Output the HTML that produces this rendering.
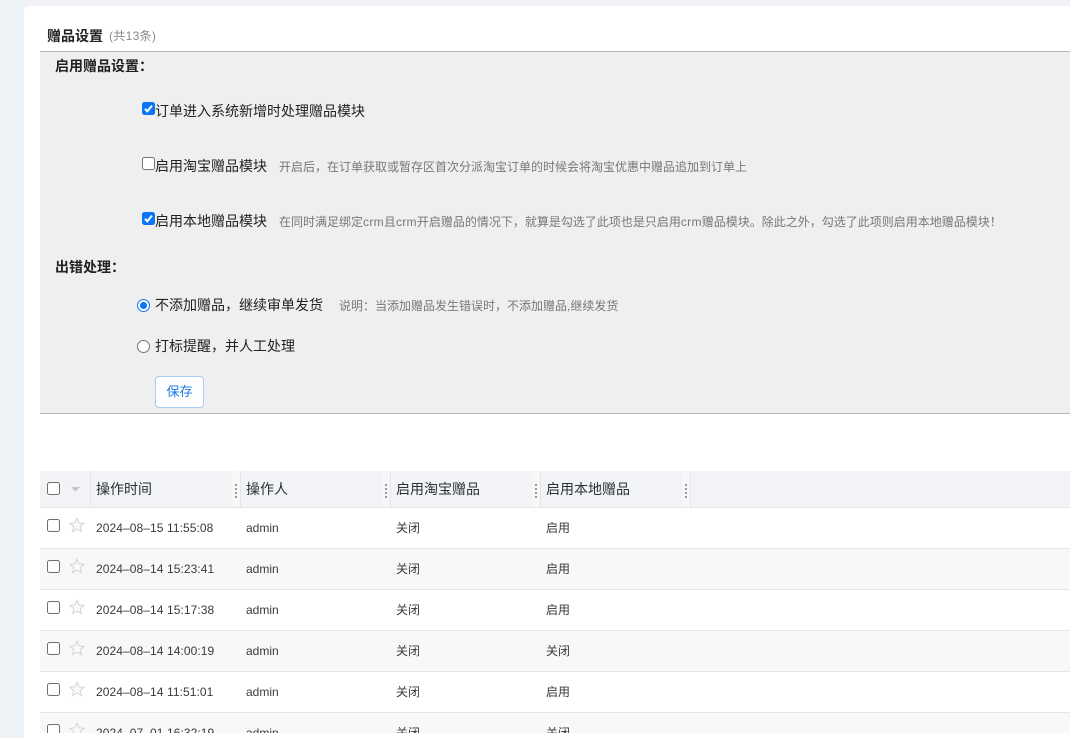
<!DOCTYPE html>
<html lang="zh">
<head>
<meta charset="utf-8">
<style>
html,body{margin:0;padding:0;width:1070px;height:738px;overflow:hidden;background:#f0f2f5;}
body{position:relative;font-family:"Liberation Sans","Noto Sans CJK SC",sans-serif;color:#222;}
.abs,.t,.cb,.rd,.row,.hc,.grip{position:absolute;}
.t{white-space:nowrap;line-height:20px;}
.side{left:0;top:0;width:24px;height:738px;background:linear-gradient(to right,#f0f2f5 0,#f0f2f5 8px,#eaf3f8 24px);}
.card{left:24px;top:6px;width:1046px;height:732px;background:#fff;border-top-left-radius:4px;}
.panel{left:40px;top:51px;width:1030px;height:361px;background:#efefef;border-top:1px solid #b5b5b5;border-bottom:1px solid #b5b5b5;box-sizing:content-box;}
.l{font-size:14px;color:#222;}
.n{font-size:12px;color:#777;}
.b{font-size:14px;font-weight:bold;color:#222;}
.cb{width:13px;height:13px;box-sizing:border-box;border-radius:2.5px;}
.on{background:#0b75f5;}
.off{background:#fff;border:1px solid #767676;}
.cb svg{position:absolute;left:0;top:0;}
.rd{width:13px;height:13px;box-sizing:border-box;border-radius:50%;background:#fff;border:1px solid #767676;}
.rd.sel{border:1.5px solid #0b75f5;}
.rd.sel:after{content:"";position:absolute;left:1.5px;top:1.5px;width:7px;height:7px;border-radius:50%;background:#0b75f5;}
.btn{left:155px;top:376px;width:49px;height:32px;box-sizing:border-box;background:#fff;border:1px solid #a9cdf5;border-radius:4px;color:#1677e6;font-size:13px;line-height:30px;text-align:center;}
.clip{left:40px;top:471px;width:1030px;height:262px;overflow:hidden;}
.head{left:0;top:0;width:1030px;height:36px;background:#f1f3f7;border-bottom:1px solid #e4e6ea;}
.hc{top:0;height:36px;width:1px;background:#e4e6ea;}
.gp{position:absolute;top:0;width:8px;height:36px;background:#f7f7f8;}
.grip{width:2px;height:2px;background:#999;box-shadow:0 4px 0 #999,0 8px 0 #999,0 12px 0 #999;}
.ht{font-size:14px;color:#2b2f36;top:8px;}
.row{left:0;width:1030px;height:40px;background:#fff;border-bottom:1px solid #e4e6ea;}
.row.alt{background:#f8f8f8;}
.row .t{font-size:12px;color:#3a3a3a;top:10px;}
.row .d{letter-spacing:.08px;}
.row .cb{left:7px;top:11px;border-color:#6f6f6f;}
.row svg.star{position:absolute;left:29px;top:9px;}
</style>
</head>
<body>
<div class="abs side"></div>
<div class="abs card"></div>

<div class="t" style="left:47px;top:26px;font-size:14px;font-weight:bold;color:#222;">赠品设置</div>
<div class="t" style="left:109px;top:26px;font-size:12px;color:#888;letter-spacing:.3px;">(共13条)</div>

<div class="abs panel"></div>

<div class="t b" style="left:55px;top:56px;">启用赠品设置：</div>

<div class="cb on" style="left:142px;top:102px;"><svg width="13" height="13" viewBox="0 0 13 13"><path d="M3 6.8L5.3 9.3L10 3.6" fill="none" stroke="#fff" stroke-width="2"/></svg></div>
<div class="t l" style="left:155px;top:101px;">订单进入系统新增时处理赠品模块</div>

<div class="cb off" style="left:142px;top:157px;"></div>
<div class="t l" style="left:155px;top:156px;">启用淘宝赠品模块</div>
<div class="t n" style="left:279px;top:157px;">开启后，在订单获取或暂存区首次分派淘宝订单的时候会将淘宝优惠中赠品追加到订单上</div>

<div class="cb on" style="left:142px;top:212px;"><svg width="13" height="13" viewBox="0 0 13 13"><path d="M3 6.8L5.3 9.3L10 3.6" fill="none" stroke="#fff" stroke-width="2"/></svg></div>
<div class="t l" style="left:155px;top:211px;">启用本地赠品模块</div>
<div class="t n" style="left:279px;top:212px;">在同时满足绑定<span style="letter-spacing:.3px">crm</span>且<span style="letter-spacing:.3px">crm</span>开启赠品的情况下，就算是勾选了此项也是只启用<span style="letter-spacing:.3px">crm</span>赠品模块。除此之外，勾选了此项则启用本地赠品模块！</div>

<div class="t b" style="left:55px;top:257px;">出错处理：</div>

<div class="rd sel" style="left:137px;top:299px;"></div>
<div class="t l" style="left:155px;top:295px;">不添加赠品，继续审单发货</div>
<div class="t n" style="left:339px;top:296px;">说明：当添加赠品发生错误时，不添加赠品,继续发货</div>

<div class="rd" style="left:137px;top:340px;"></div>
<div class="t l" style="left:155px;top:336px;">打标提醒，并人工处理</div>

<div class="abs btn">保存</div>

<div class="abs clip">
  <div class="abs head"></div>
  <div class="cb off" style="left:7px;top:11px;border-color:#6f6f6f;"></div>
  <svg style="position:absolute;left:31px;top:16px;" width="9" height="5" viewBox="0 0 9 5"><path d="M0 0H9L4.5 4.5Z" fill="#c4c4c4"/></svg>
  <div class="hc" style="left:50px;"></div>
  <div class="gp" style="left:192px;"></div><div class="grip" style="left:195px;top:13px;"></div><div class="hc" style="left:200px;"></div>
  <div class="gp" style="left:342px;"></div><div class="grip" style="left:345px;top:13px;"></div><div class="hc" style="left:350px;"></div>
  <div class="gp" style="left:492px;"></div><div class="grip" style="left:495px;top:13px;"></div><div class="hc" style="left:500px;"></div>
  <div class="gp" style="left:642px;"></div><div class="grip" style="left:645px;top:13px;"></div><div class="hc" style="left:650px;"></div>
  <div class="t ht" style="left:56px;">操作时间</div>
  <div class="t ht" style="left:206px;">操作人</div>
  <div class="t ht" style="left:356px;">启用淘宝赠品</div>
  <div class="t ht" style="left:506px;">启用本地赠品</div>

  <div class="row" style="top:37px;">
    <div class="cb off"></div>
    <svg class="star" width="16" height="16" viewBox="0 0 16 16"><path d="M8 1.2L10 5.9L15 6.3L11.2 9.6L12.4 14.6L8 11.9L3.6 14.6L4.8 9.6L1 6.3L6 5.9Z" fill="#fafafa" stroke="#d4d4d4"/></svg>
    <div class="t d" style="left:56px;">2024–08–15 11:55:08</div><div class="t" style="left:206px;">admin</div><div class="t" style="left:356px;">关闭</div><div class="t" style="left:506px;">启用</div>
  </div>
  <div class="row alt" style="top:78px;">
    <div class="cb off"></div>
    <svg class="star" width="16" height="16" viewBox="0 0 16 16"><path d="M8 1.2L10 5.9L15 6.3L11.2 9.6L12.4 14.6L8 11.9L3.6 14.6L4.8 9.6L1 6.3L6 5.9Z" fill="#fafafa" stroke="#d4d4d4"/></svg>
    <div class="t d" style="left:56px;">2024–08–14 15:23:41</div><div class="t" style="left:206px;">admin</div><div class="t" style="left:356px;">关闭</div><div class="t" style="left:506px;">启用</div>
  </div>
  <div class="row" style="top:119px;">
    <div class="cb off"></div>
    <svg class="star" width="16" height="16" viewBox="0 0 16 16"><path d="M8 1.2L10 5.9L15 6.3L11.2 9.6L12.4 14.6L8 11.9L3.6 14.6L4.8 9.6L1 6.3L6 5.9Z" fill="#fafafa" stroke="#d4d4d4"/></svg>
    <div class="t d" style="left:56px;">2024–08–14 15:17:38</div><div class="t" style="left:206px;">admin</div><div class="t" style="left:356px;">关闭</div><div class="t" style="left:506px;">启用</div>
  </div>
  <div class="row alt" style="top:160px;">
    <div class="cb off"></div>
    <svg class="star" width="16" height="16" viewBox="0 0 16 16"><path d="M8 1.2L10 5.9L15 6.3L11.2 9.6L12.4 14.6L8 11.9L3.6 14.6L4.8 9.6L1 6.3L6 5.9Z" fill="#fafafa" stroke="#d4d4d4"/></svg>
    <div class="t d" style="left:56px;">2024–08–14 14:00:19</div><div class="t" style="left:206px;">admin</div><div class="t" style="left:356px;">关闭</div><div class="t" style="left:506px;">关闭</div>
  </div>
  <div class="row" style="top:201px;">
    <div class="cb off"></div>
    <svg class="star" width="16" height="16" viewBox="0 0 16 16"><path d="M8 1.2L10 5.9L15 6.3L11.2 9.6L12.4 14.6L8 11.9L3.6 14.6L4.8 9.6L1 6.3L6 5.9Z" fill="#fafafa" stroke="#d4d4d4"/></svg>
    <div class="t d" style="left:56px;">2024–08–14 11:51:01</div><div class="t" style="left:206px;">admin</div><div class="t" style="left:356px;">关闭</div><div class="t" style="left:506px;">启用</div>
  </div>
  <div class="row alt" style="top:242px;">
    <div class="cb off"></div>
    <svg class="star" width="16" height="16" viewBox="0 0 16 16"><path d="M8 1.2L10 5.9L15 6.3L11.2 9.6L12.4 14.6L8 11.9L3.6 14.6L4.8 9.6L1 6.3L6 5.9Z" fill="#fafafa" stroke="#d4d4d4"/></svg>
    <div class="t d" style="left:56px;">2024–07–01 16:32:19</div><div class="t" style="left:206px;">admin</div><div class="t" style="left:356px;">关闭</div><div class="t" style="left:506px;">关闭</div>
  </div>
</div>
</body>
</html>
